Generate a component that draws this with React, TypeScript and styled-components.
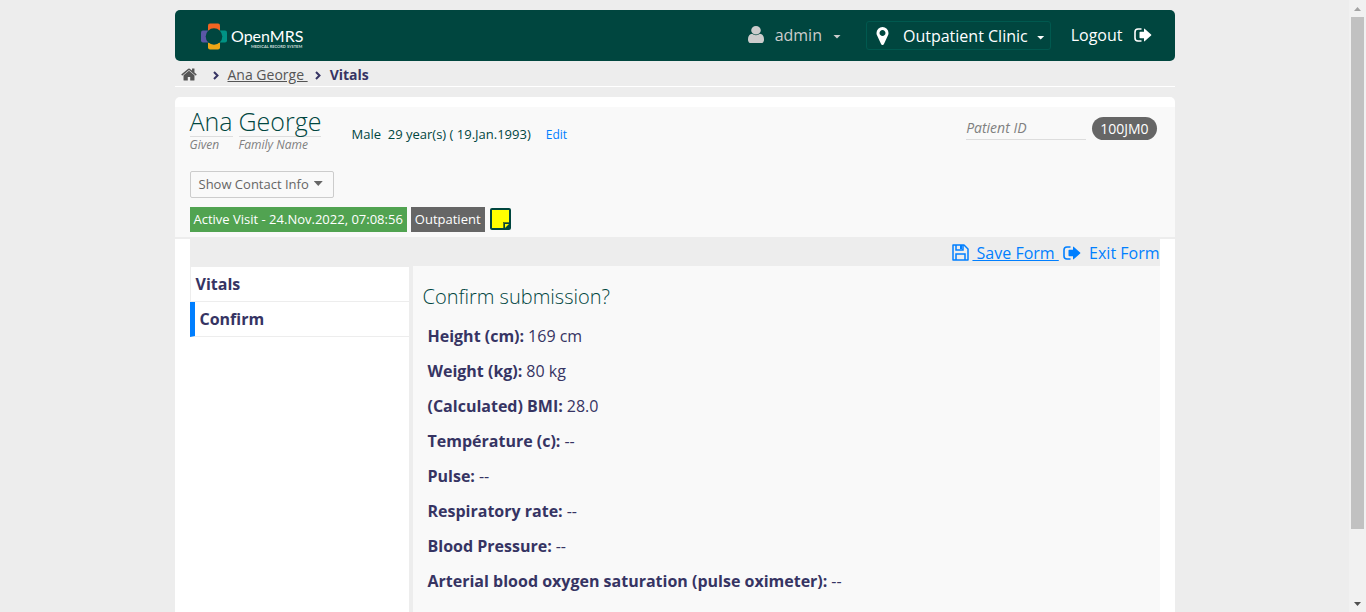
import React from "react";
import styled, { createGlobalStyle } from "styled-components";

const GlobalStyle = createGlobalStyle`
  *, *::before, *::after { box-sizing: border-box; }
  html { background: #ededed; }
  body {
    margin: 0;
    overflow: hidden;
    background: #ededed;
    color: #363463;
    font-family: "Open Sans", "Noto Sans", sans-serif;
    font-size: 16px;
    line-height: 24px;
  }
  button { font: inherit; color: inherit; background: none; border: 0; padding: 0; cursor: pointer; }
  h1, h2, p, dl, dd, dt, ul, ol { margin: 0; padding: 0; }
  svg { display: block; flex: none; }
`;

const Screen = styled.div`
  display: grid;
  grid-template-columns: 1fr 17px;
  height: 100vh;
`;

const Viewport = styled.div`
  overflow: hidden;
  padding-top: 10px;
`;

const Page = styled.div`
  max-width: 1000px;
  min-height: 100%;
  margin: 0 auto;
  display: flex;
  flex-direction: column;
`;

const ScrollRail = styled.div`
  display: flex;
  flex-direction: column;
  align-items: center;
  background: #f1f1f1;
`;

const ScrollEnd = styled.div`
  display: flex;
  align-items: center;
  justify-content: center;
  height: 17px;
`;

const ScrollTrack = styled.div`
  flex: 1;
  width: 13px;
`;

const ScrollThumb = styled.div`
  height: 88.6%;
  background: #c1c1c1;
`;

const Header = styled.header`
  display: flex;
  align-items: center;
  justify-content: space-between;
  height: 51px;
  padding: 0 23px 0 25px;
  border-radius: 5px;
  background: #00463f;
  color: #fff;
`;

const HomeLink = styled.a`
  display: block;
`;

const UserNav = styled.nav`
  display: flex;
  align-items: center;
`;

const UserButton = styled.button`
  display: flex;
  align-items: center;
  gap: 11px;
  && { padding-bottom: 2px; color: #ccc; }
`;

const LocationButton = styled.button`
  display: flex;
  align-items: center;
  height: 29px;
  margin: 0 20px 0 25px;
  && { padding: 0 5px 0 9px; border: 1px solid #00594f; }
  border-radius: 3px;
`;

const LocationName = styled.span`
  margin: 0 9px 0 14px;
`;

const Caret = styled.span`
  width: 8px;
  height: 4px;
  margin-top: 4px;
  background: currentColor;
  clip-path: polygon(0 0, 100% 0, 50% 100%);
`;

const LogoutLink = styled.a`
  display: flex;
  align-items: center;
  gap: 11px;
  padding-bottom: 2px;
  color: #fff;
  text-decoration: none;
`;

const Breadcrumbs = styled.ol`
  display: flex;
  align-items: center;
  height: 26px;
  && { padding: 2px 0 0 6px; }
  border-bottom: 1px solid #fff;
  list-style: none;
  font-size: 14px;
  color: #555;
`;

const Crumb = styled.li<{ $current?: boolean }>`
  display: flex;
  align-items: center;
  font-weight: ${(p) => (p.$current ? 700 : 400)};
  color: ${(p) => (p.$current ? "#363463" : "#555")};
  a { color: inherit; white-space: pre; }
`;

const Separator = styled.svg<{ $wide?: boolean }>`
  margin: 2px 9px 0 ${(p) => (p.$wide ? 16 : 7)}px;
  color: #363463;
`;

const Card = styled.main`
  flex: 1;
  display: flex;
  flex-direction: column;
  margin-top: 10px;
  padding-top: 10px;
  border-radius: 5px 5px 0 0;
  background: #fff;
`;

const PatientHeader = styled.section`
  padding: 0 18px 5px 15px;
  border-bottom: 2px solid #ededed;
  background: #f9f9f9;
  color: #00463f;
`;

const Identity = styled.div`
  display: flex;
  height: 64px;
`;

const PatientName = styled.h1`
  display: flex;
  gap: 6px;
  font-weight: 300;
`;

const NamePart = styled.span`
  display: flex;
  flex-direction: column;
`;

const NameText = styled.span`
  height: 30px;
  border-bottom: 1px solid #ddd;
  font-size: 25px;
  line-height: 28px;
`;

const NameLabel = styled.em`
  font-size: 12px;
  font-weight: 400;
  line-height: 16px;
  color: #808080;
`;

const Demographics = styled.div`
  display: flex;
  align-items: baseline;
  gap: 15px;
  margin: 17px 0 0 30px;
  font-size: 13px;
  line-height: 20px;
  white-space: pre;
`;

const EditLink = styled.a`
  font-size: 12px;
  color: #007fff;
  text-decoration: none;
`;

const Identifier = styled.div`
  display: flex;
  align-items: flex-start;
  gap: 6px;
  margin: 10px 0 0 auto;
  font-size: 14px;
  line-height: 23px;
`;

const IdentifierLabel = styled.em`
  width: 120px;
  border-bottom: 1px solid #ddd;
  line-height: 22px;
  color: #808080;
`;

const IdentifierValue = styled.span`
  padding: 0 8px;
  border-radius: 12px;
  background: #666;
  color: #fff;
`;

const ContactButton = styled.button`
  display: flex;
  align-items: center;
  gap: 5px;
  height: 27px;
  && {
    padding: 0 10px 2px 8px;
    border: 1px solid #ccc;
    font-size: 13px;
    color: #666;
  }
  border-radius: 2px;
`;

const ContactCaret = styled(Caret)`
  width: 9px;
  height: 5px;
  margin-top: 0;
`;

const Tags = styled.div`
  display: flex;
  align-items: center;
  gap: 4px;
  margin-top: 9px;
`;

const Tag = styled.span<{ $tone: string }>`
  padding: 0 4px;
  background: ${(p) => p.$tone};
  color: #fff;
  font-size: 13px;
  line-height: 25px;
`;

const NoteButton = styled.button`
  display: block;
  && { padding: 0 1px 1px; }
`;

const FormBody = styled.div`
  flex: 1;
  display: flex;
  flex-direction: column;
  padding: 0 15px;
`;

const FormActions = styled.div`
  display: flex;
  justify-content: flex-end;
  align-items: center;
  gap: 4px;
  height: 27px;
  background: #ededed;
`;

const FormLink = styled.a<{ $underlined?: boolean }>`
  display: flex;
  align-items: center;
  gap: ${(p) => (p.$underlined ? 3 : 0)}px;
  color: #007fff;
  text-decoration: none;
  span {
    white-space: pre;
    text-decoration: ${(p) => (p.$underlined ? "underline" : "none")};
  }
`;

const FormColumns = styled.div`
  flex: 1;
  display: flex;
`;

const Steps = styled.ul`
  width: 223px;
  border-top: 1px solid #ededed;
  border-right: 4px solid #ededed;
  list-style: none;
`;

const Step = styled.li<{ $active?: boolean }>`
  height: 35px;
  padding-left: 5px;
  border-left: ${(p) => (p.$active ? "5px solid #007fff" : "1px solid #ededed")};
  border-bottom: 1px solid #ededed;
  font-weight: 700;
  line-height: 35px;
`;

const Confirmation = styled.section`
  flex: 1;
  padding: 19px 10px;
  background: #f9f9f9;
`;

const Question = styled.h2`
  font-size: 20px;
  font-weight: 300;
  line-height: 24px;
  color: #00463f;
`;

const Answers = styled.dl`
  && { padding: 10px 5px; }
`;

const Answer = styled.div`
  display: flex;
  gap: 4px;
  line-height: 35px;
  dt { font-weight: 700; }
`;

const Logo = () => (
  <svg width="108" height="30" viewBox="0 0 108 30" role="img" aria-label="OpenMRS">
    <rect x="8" y="2.500" width="12" height="9" rx="2" fill="#f26522" />
    <rect x="8" y="19.500" width="12" height="9" rx="2" fill="#eea616" />
    <rect x="1" y="9.500" width="9" height="12" rx="2" fill="#5b57a6" />
    <rect x="18" y="9.500" width="9" height="12" rx="2" fill="#009384" />
    <circle cx="14" cy="15.500" r="8.300" fill="#00463f" />
    <text x="31" y="21" fontFamily="Lato, sans-serif" fontSize="16" fill="#fff">OpenMRS</text>
    <text x="51" y="27" fontFamily="Lato, sans-serif" fontSize="4" fontWeight="700" fill="#cfdedc">MEDICAL RECORD SYSTEM</text>
  </svg>
);

const HomeIcon = () => (
  <svg width="16" height="17" viewBox="0 0 1664 1792" fill="#555">
    <path d="M1408 992v480q0 26-19 45t-45 19H960v-384H704v384H320q-26 0-45-19t-19-45V992q0-1 .5-3t.5-3l575-474 575 474q1 2 1 6zm223-69l-62 74q-8 9-21 11h-3q-13 0-21-7L832 424l-692 577q-12 8-24 7-13-2-21-11l-62-74q-8-10-7-23.500t11-21.500l719-599q32-26 76-26t76 26l244 204V288q0-14 9-23t23-9h192q14 0 23 9t9 23v408l219 182q10 8 11 21.500t-7 23.500z" />
  </svg>
);

const UserIcon = () => (
  <svg width="16" height="17" viewBox="256 128 1280 1536" preserveAspectRatio="none" fill="#ccc">
    <path d="M1536 1399q0 109-62.500 187t-150.500 78H469q-88 0-150.500-78T256 1399q0-85 8.500-160.500t31.500-152 58.500-131 94-89T583 832q131 128 313 128t313-128q76 0 134.500 34.500t94 89 58.500 131 31.500 152 8.500 160.500zm-256-887q0 159-112.500 271.500T896 896 624.500 783.500 512 512t112.500-271.500T896 128t271.500 112.500T1280 512z" />
  </svg>
);

const PinIcon = () => (
  <svg width="13" height="18" viewBox="384 128 1024 1536" fill="#fff">
    <path d="M1152 640q0-106-75-181t-181-75-181 75-75 181 75 181 181 75 181-75 75-181zm256 0q0 109-33 179l-364 774q-16 33-47.500 52t-67.500 19-67.500-19-46.500-52L417 819q-33-70-33-179 0-212 150-362t362-150 362 150 150 362z" />
  </svg>
);

const ExitIcon = () => (
  <svg width="18" height="14" viewBox="0 0 18 14">
    <path d="M7.500 1H4Q1 1 1 4v6q0 3 3 3h3.500" fill="none" stroke="currentColor" strokeWidth="1.600" />
    <path d="M5.500 4.500q0-.8.800-.8H10V1.200q0-1 .9-.3l6.200 5.500q.6.600 0 1.200l-6.200 5.500q-.9.700-.9-.3v-2.500H6.300q-.8 0-.8-.8z" fill="currentColor" />
  </svg>
);

const SaveIcon = () => (
  <svg width="17" height="17" viewBox="0 0 17 17" fill="none" stroke="currentColor" strokeWidth="1.500">
    <path d="M1 1h11l4 4v11H1z" strokeLinejoin="round" />
    <path d="M4 16v-6h9v6M4 1v5h7V1" />
    <path d="M8 1h2v4H8z" fill="currentColor" stroke="none" />
  </svg>
);

const NoteIcon = () => (
  <svg width="21" height="22" viewBox="0 0 21 22">
    <rect width="21" height="22" rx="2" fill="#00463f" />
    <path d="M2 2h17v12h-6v6H2z" fill="#ff0" />
    <path d="M15 16h4l-4 4z" fill="#ff0" />
    <path d="M13.500 20v-5.500H19" fill="none" stroke="#5d7d1c" />
  </svg>
);

const Chevron = ({ wide }: { wide?: boolean }) => (
  <Separator $wide={wide} width="6" height="9" viewBox="0 0 6 9" fill="none" stroke="currentColor" strokeWidth="2">
    <path d="M1 1l3.500 3.500L1 8" />
  </Separator>
);

const answers: [string, string][] = [
  ["Height (cm):", "169 cm"],
  ["Weight (kg):", "80 kg"],
  ["(Calculated) BMI:", "28.0"],
  ["Température (c):", "--"],
  ["Pulse:", "--"],
  ["Respiratory rate:", "--"],
  ["Blood Pressure:", "--"],
  ["Arterial blood oxygen saturation (pulse oximeter):", "--"],
];

export default function App() {
  return (
    <>
      <GlobalStyle />
      <Screen>
        <Viewport>
          <Page>
            <Header>
              <HomeLink href="#home"><Logo /></HomeLink>
              <UserNav>
                <UserButton type="button">
                  <UserIcon />
                  <span>admin</span>
                  <Caret />
                </UserButton>
                <LocationButton type="button">
                  <PinIcon />
                  <LocationName>Outpatient Clinic</LocationName>
                  <Caret />
                </LocationButton>
                <LogoutLink href="#logout">
                  Logout <ExitIcon />
                </LogoutLink>
              </UserNav>
            </Header>
            <Breadcrumbs>
              <Crumb><a href="#home" aria-label="Home"><HomeIcon /></a></Crumb>
              <Crumb><Chevron wide /><a href="#patient">{"Ana George "}</a></Crumb>
              <Crumb $current><Chevron />Vitals</Crumb>
            </Breadcrumbs>
            <Card>
              <PatientHeader>
                <Identity>
                  <PatientName>
                    <NamePart><NameText>Ana</NameText><NameLabel>Given</NameLabel></NamePart>
                    <NamePart><NameText>George</NameText><NameLabel>Family Name</NameLabel></NamePart>
                  </PatientName>
                  <Demographics>
                    <span>{"Male  29 year(s) ( 19.Jan.1993)"}</span>
                    <EditLink href="#edit">Edit</EditLink>
                  </Demographics>
                  <Identifier>
                    <IdentifierLabel>Patient ID</IdentifierLabel>
                    <IdentifierValue>100JM0</IdentifierValue>
                  </Identifier>
                </Identity>
                <ContactButton type="button">Show Contact Info <ContactCaret /></ContactButton>
                <Tags>
                  <Tag $tone="#51a351">Active Visit - 24.Nov.2022, 07:08:56</Tag>
                  <Tag $tone="#666">Outpatient</Tag>
                  <NoteButton type="button" aria-label="Sticky note"><NoteIcon /></NoteButton>
                </Tags>
              </PatientHeader>
              <FormBody>
                <FormActions>
                  <FormLink href="#save" $underlined><SaveIcon /><span>{" Save Form "}</span></FormLink>
                  <FormLink href="#exit"><ExitIcon /><span>{"  Exit Form"}</span></FormLink>
                </FormActions>
                <FormColumns>
                  <Steps>
                    <Step>Vitals</Step>
                    <Step $active>Confirm</Step>
                  </Steps>
                  <Confirmation>
                    <Question>Confirm submission?</Question>
                    <Answers>
                      {answers.map(([label, value]) => (
                        <Answer key={label}>
                          <dt>{label}</dt>
                          <dd>{value}</dd>
                        </Answer>
                      ))}
                    </Answers>
                  </Confirmation>
                </FormColumns>
              </FormBody>
            </Card>
          </Page>
        </Viewport>
        <ScrollRail aria-hidden="true">
          <ScrollEnd>
            <svg width="7" height="4" viewBox="0 0 7 4"><path d="M0 4l3.500-4L7 4z" fill="#a3a3a3" /></svg>
          </ScrollEnd>
          <ScrollTrack><ScrollThumb /></ScrollTrack>
          <ScrollEnd>
            <svg width="7" height="4" viewBox="0 0 7 4"><path d="M0 0l3.500 4L7 0z" fill="#505050" /></svg>
          </ScrollEnd>
        </ScrollRail>
      </Screen>
    </>
  );
}
